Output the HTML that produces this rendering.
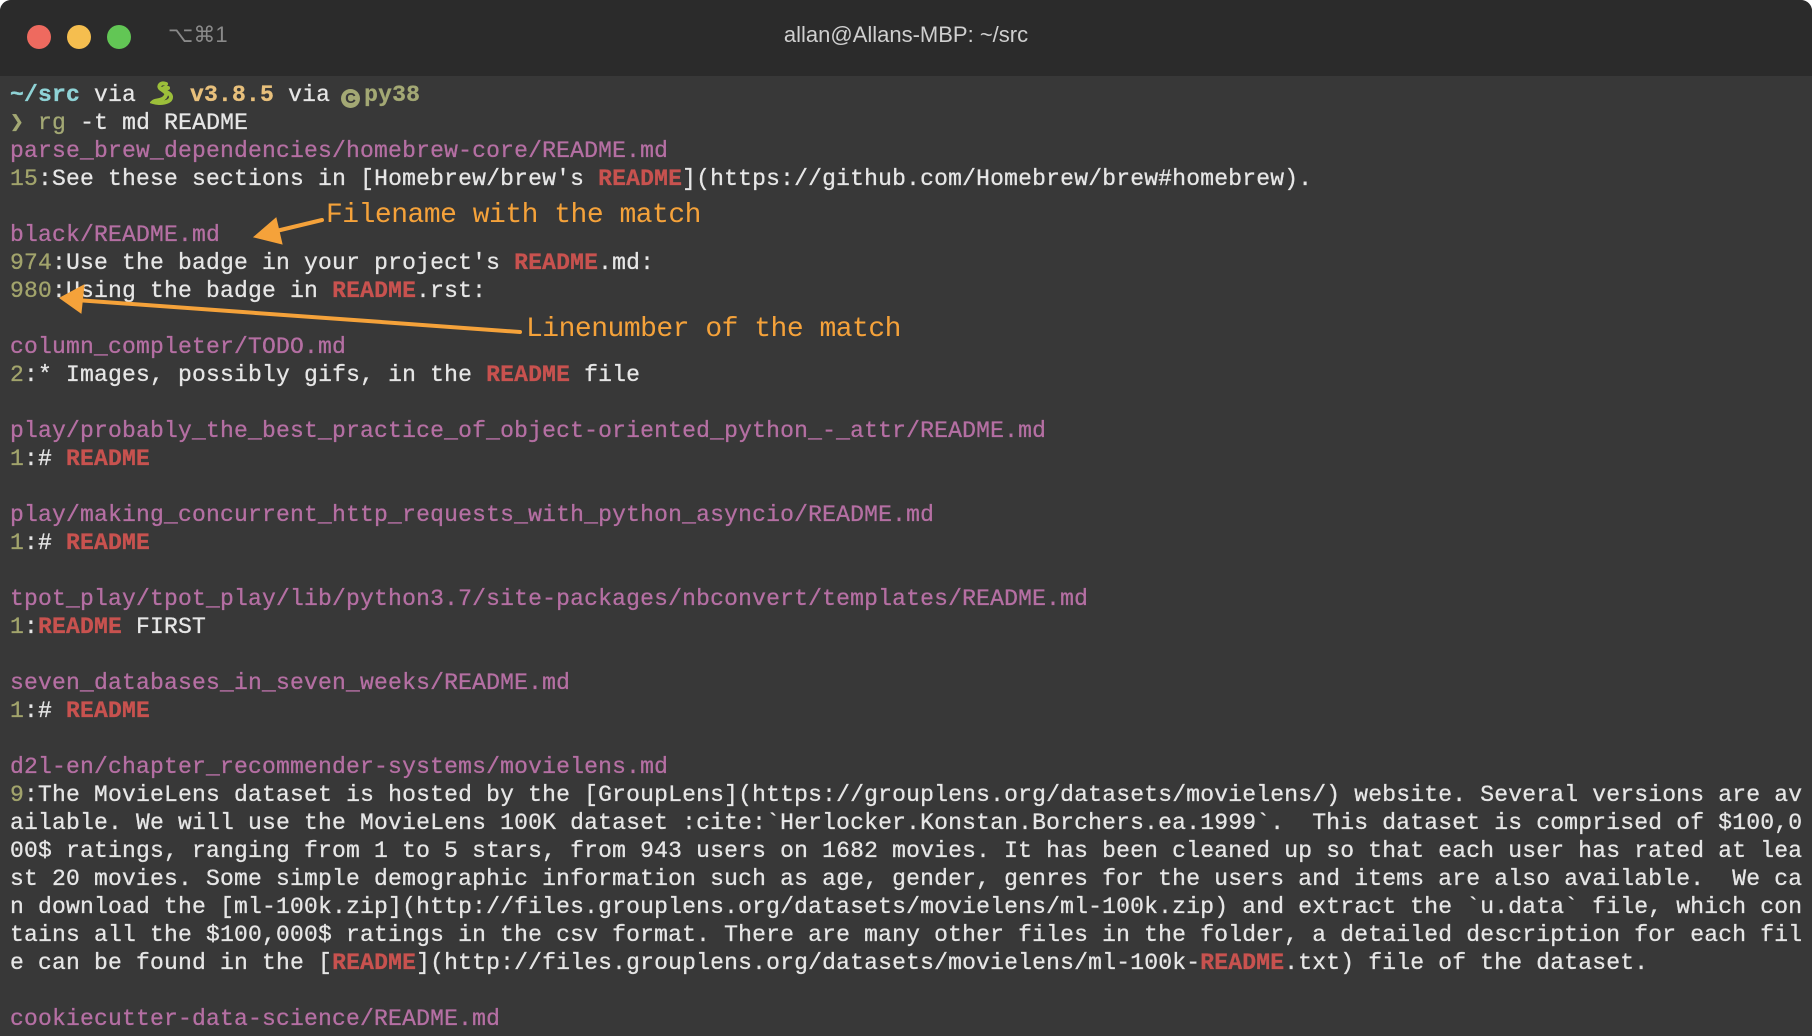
<!DOCTYPE html>
<html><head><meta charset="utf-8"><style>
html,body{margin:0;padding:0;background:#fff;width:1812px;height:1036px;overflow:hidden}
.win{position:absolute;left:0;top:0;width:1812px;height:1036px;border-radius:11px 11px 0 0;overflow:hidden;background:#383838}
.tb{position:absolute;left:0;top:0;width:1812px;height:76px;background:#2b2b2b}
.dot{position:absolute;top:25px;width:24px;height:24px;border-radius:50%}
.key{position:absolute;left:168px;top:22px;font:22px "Liberation Sans","DejaVu Sans",sans-serif;color:#8a8a8a}
.title{position:absolute;left:0;width:1812px;top:22px;text-align:center;font:22px "Liberation Sans",sans-serif;color:#cfcfcf}
pre{position:absolute;left:10px;top:81px;margin:0;font:23px/28px "Liberation Mono",monospace;letter-spacing:0.2px;color:#e6e6e6;white-space:pre;-webkit-text-stroke:0.3px}
.p{color:#b56fa3}.n{color:#a2a46c}.r{color:#c8524f;font-weight:bold}
.c{color:#8fd3d6;font-weight:bold}.y{color:#e8c07c;font-weight:bold}.o{color:#a3a874;font-weight:bold}.g{color:#a3a874}
.cc{display:inline-block;width:19px;height:19px;border-radius:50%;background:#a3a874;color:#383838;font:bold 15px/19px "Liberation Sans",sans-serif;text-align:center;letter-spacing:0;vertical-align:-2px;margin:0 4px 0 -3px;-webkit-text-stroke:0}
.ann{position:absolute;font:28px "Liberation Mono",monospace;letter-spacing:-0.5px;color:#f5a23a}
svg{position:absolute;left:0;top:0}
</style></head><body><div class="win">
<div class="tb">
<div class="dot" style="left:27px;background:#ee6a5f"></div>
<div class="dot" style="left:67px;background:#f5be4f"></div>
<div class="dot" style="left:107px;background:#62c655"></div>
<div class="key">⌥⌘1</div>
<div class="title">allan@Allans-MBP: ~/src</div>
</div>
<pre><span class="c">~/src</span> via <svg style="position:relative;display:inline-block;vertical-align:-4px" width="26" height="24" viewBox="0 0 26 24"><path d="M16 3c-5-2-9 2-5 5s7 4 4 8-10 3-12 5c6 2 18 1 18-5 0-4-6-5-8-8 1-2 4-1 5-1" fill="none" stroke="#9cbf3a" stroke-width="4" stroke-linecap="round"/></svg> <span class="y">v3.8.5</span> via <span class="cc">C</span><span class="o">py38</span>
<span class="g">❯ rg</span> -t md README
<span class="p">parse_brew_dependencies/homebrew-core/README.md</span>
<span class="n">15</span>:See these sections in [Homebrew/brew's <span class="r">README</span>](https://github.com/Homebrew/brew#homebrew).

<span class="p">black/README.md</span>
<span class="n">974</span>:Use the badge in your project's <span class="r">README</span>.md:
<span class="n">980</span>:Using the badge in <span class="r">README</span>.rst:

<span class="p">column_completer/TODO.md</span>
<span class="n">2</span>:* Images, possibly gifs, in the <span class="r">README</span> file

<span class="p">play/probably_the_best_practice_of_object-oriented_python_-_attr/README.md</span>
<span class="n">1</span>:# <span class="r">README</span>

<span class="p">play/making_concurrent_http_requests_with_python_asyncio/README.md</span>
<span class="n">1</span>:# <span class="r">README</span>

<span class="p">tpot_play/tpot_play/lib/python3.7/site-packages/nbconvert/templates/README.md</span>
<span class="n">1</span>:<span class="r">README</span> FIRST

<span class="p">seven_databases_in_seven_weeks/README.md</span>
<span class="n">1</span>:# <span class="r">README</span>

<span class="p">d2l-en/chapter_recommender-systems/movielens.md</span>
<span class="n">9</span>:The MovieLens dataset is hosted by the [GroupLens](https://grouplens.org/datasets/movielens/) website. Several versions are av
ailable. We will use the MovieLens 100K dataset :cite:`Herlocker.Konstan.Borchers.ea.1999`.  This dataset is comprised of $100,0
00$ ratings, ranging from 1 to 5 stars, from 943 users on 1682 movies. It has been cleaned up so that each user has rated at lea
st 20 movies. Some simple demographic information such as age, gender, genres for the users and items are also available.  We ca
n download the [ml-100k.zip](http://files.grouplens.org/datasets/movielens/ml-100k.zip) and extract the `u.data` file, which con
tains all the $100,000$ ratings in the csv format. There are many other files in the folder, a detailed description for each fil
e can be found in the [<span class="r">README</span>](http://files.grouplens.org/datasets/movielens/ml-100k-<span class="r">README</span>.txt) file of the dataset.

<span class="p">cookiecutter-data-science/README.md</span></pre>
<div class="ann" style="left:326px;top:200px">Filename with the match</div>
<div class="ann" style="left:526px;top:314px">Linenumber of the match</div>
<svg width="1812" height="1036">
<g fill="#f5a23a" stroke="#f5a23a" stroke-width="4" stroke-linecap="round">
<line x1="322" y1="220" x2="268" y2="233"/>
<polygon points="254,237 276,218 282,244" stroke-width="1"/>
<line x1="520" y1="332" x2="76" y2="300"/>
<polygon points="60,298 84,285 81,313" stroke-width="1"/>
</g></svg>
</div></body></html>
